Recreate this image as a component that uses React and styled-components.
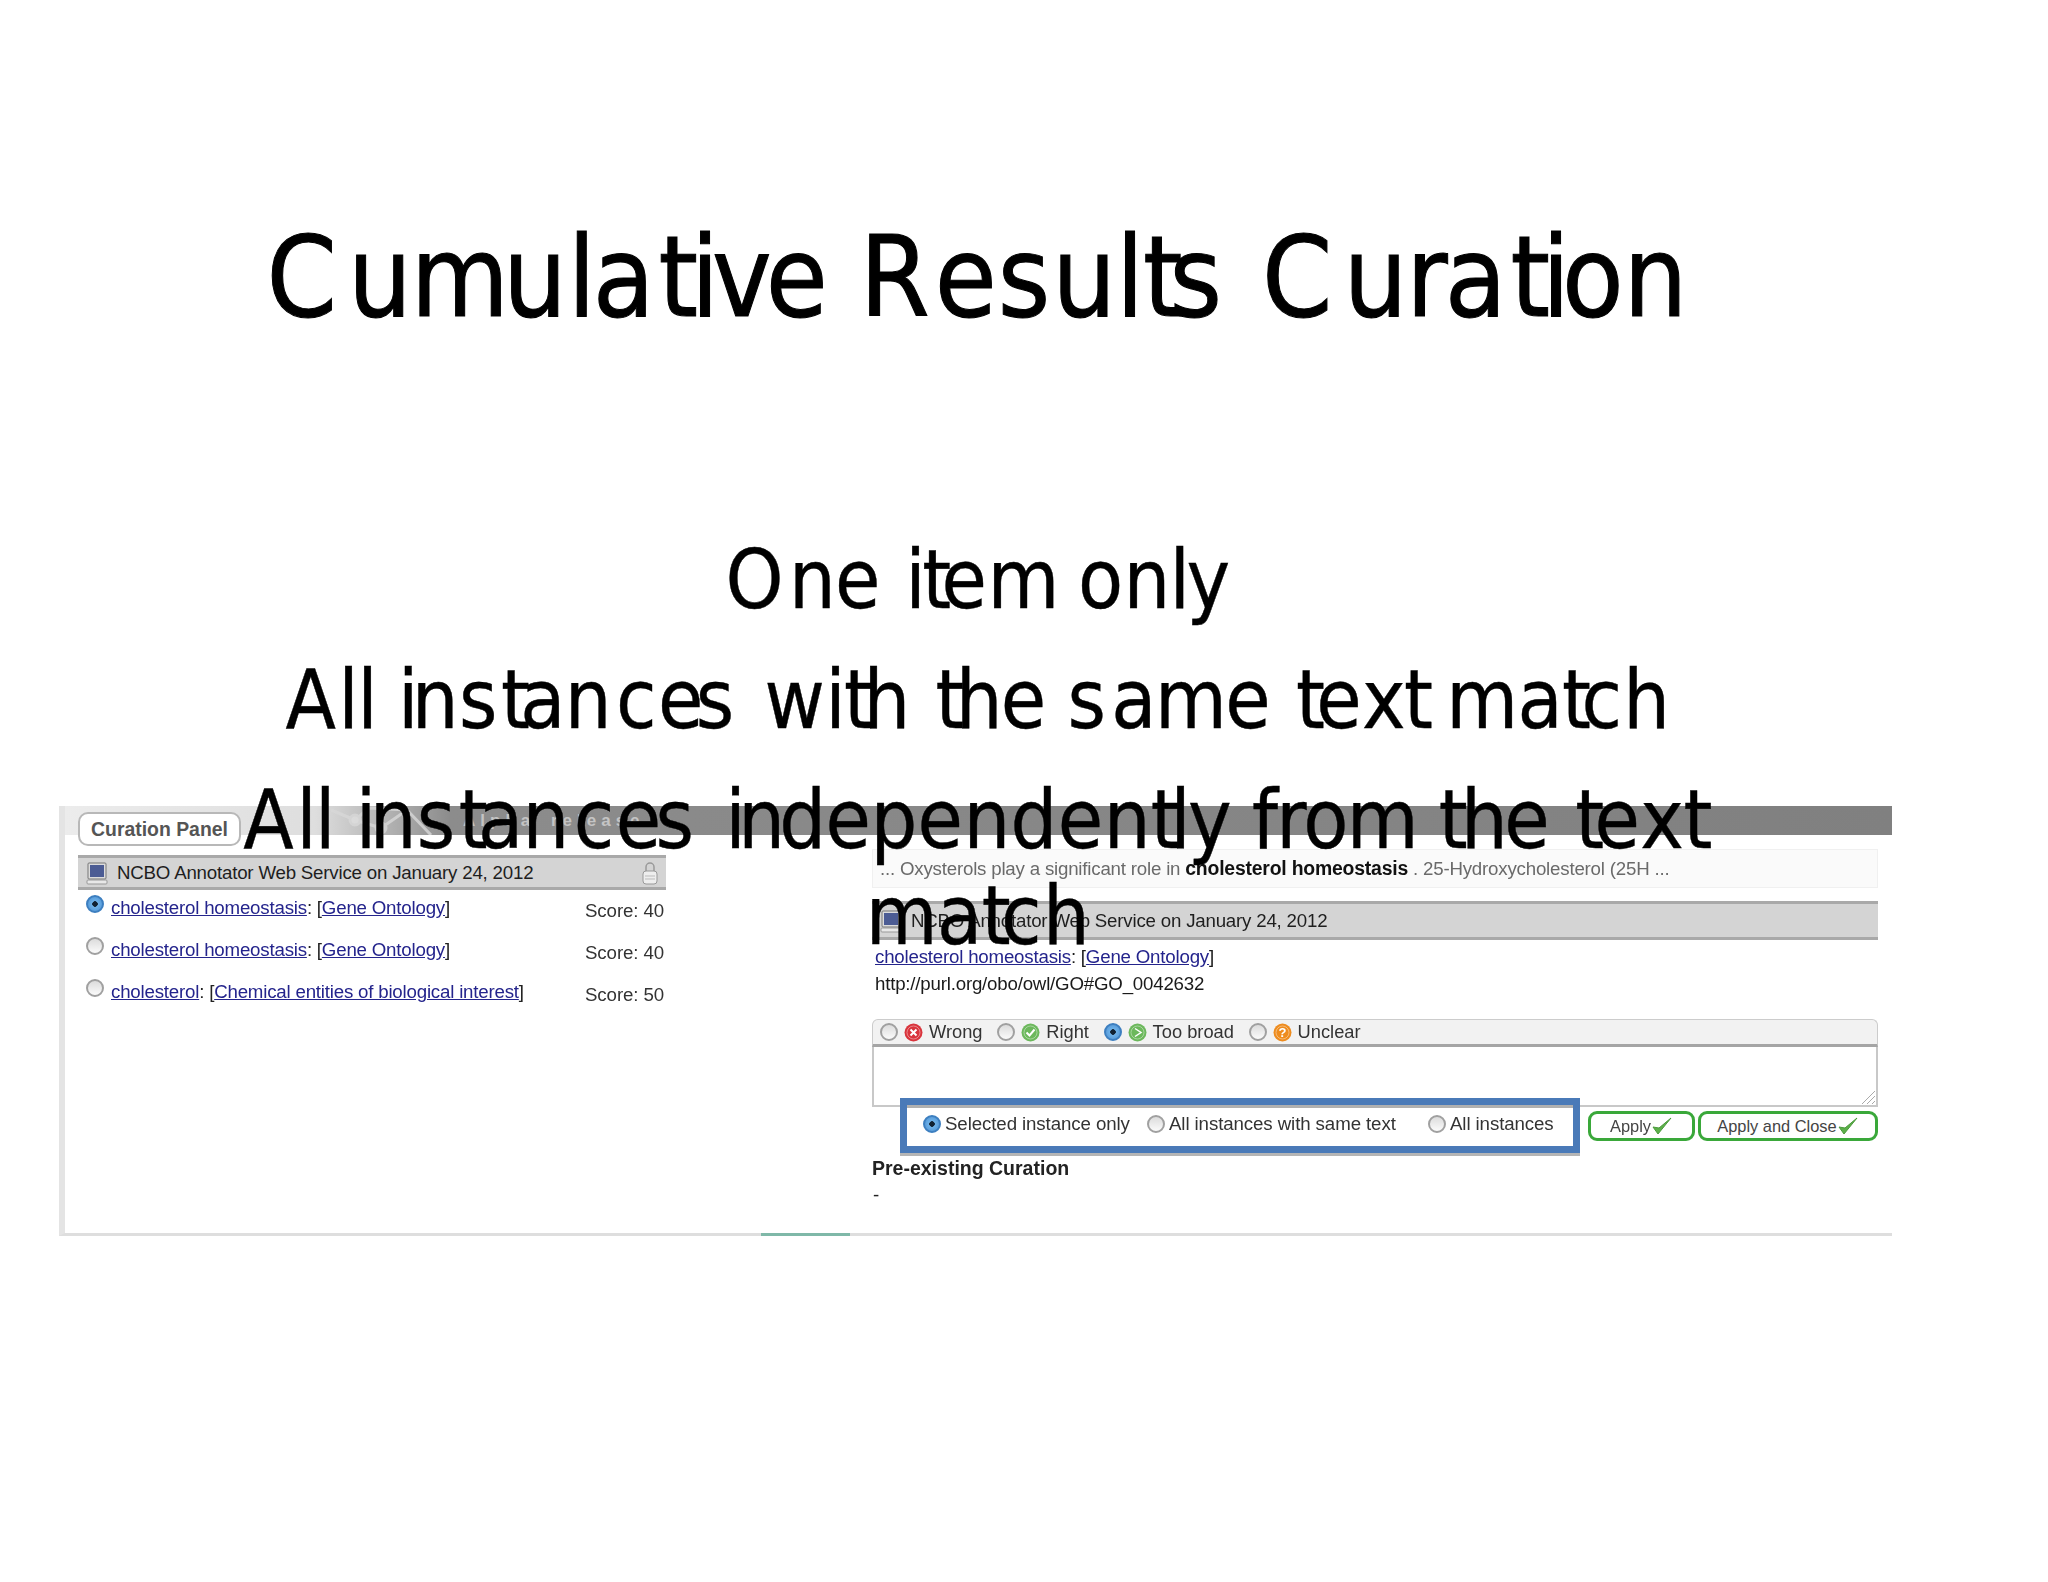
import React from 'react'
import styled, { createGlobalStyle } from 'styled-components'

const GlobalStyle = createGlobalStyle`
html, body {
  margin: 0;
  padding: 0;
  background: #fff;
}
`

const Slide = styled.div`
width: 2048px;
height: 1582px;
background: #fff;
color: #000;
font-family: "DejaVu Sans", sans-serif;
font-stretch: condensed;
overflow: hidden;
display: flex;
flex-direction: column;
`

const Title = styled.h1`
margin: 0;
padding-top: 212px;
height: 320px;
font-size: 112px;
line-height: 130px;
font-weight: 400;
text-align: center;
width: 1954px;
white-space: nowrap;
-webkit-text-stroke: 1px #000;
`

const Bullets = styled.div`
position: relative;
z-index: 2;
height: 0;
width: 1640px;
margin-left: 157px;
text-align: center;
font-size: 82px;
-webkit-text-stroke: 0.4px #000;
`

const Bullet = styled.p`
margin: 0 0 24px;
line-height: 96px;
`

const Glyphs = styled.span`
letter-spacing: ${p => p.$k}px;
`

const Panel = styled.div`
margin: 274px 0 0 59px;
width: 1833px;
height: 430px;
box-sizing: border-box;
border-left: 6px solid #e4e4e4;
border-bottom: 3px solid #dedede;
position: relative;
filter: blur(0.45px);
font-family: "Liberation Sans", sans-serif;
font-stretch: normal;
font-size: 18.7px;
color: #222;
`

const TopBar = styled.div`
height: 29px;
position: relative;
background: linear-gradient(90deg, #ececec 0, #dedede 250px, #b4b4b4 320px, #8c8c8c 385px, #808080 100%);
color: #c4c4c4;
font-size: 17px;
font-weight: bold;
letter-spacing: 5px;
word-spacing: 6px;
padding-left: 398px;
line-height: 30px;
white-space: nowrap;
`

const Tab = styled.div`
position: absolute;
left: 13px;
top: 6px;
width: 163px;
height: 34px;
box-sizing: border-box;
background: #fff;
border: 2px solid #b8b8b8;
border-radius: 10px;
font-weight: bold;
color: #555;
font-size: 19.4px;
line-height: 31px;
text-align: center;
white-space: nowrap;
`

const Logo = styled.svg`
position: absolute;
left: 262px;
top: 0;
`

const Columns = styled.div`
display: grid;
grid-template-columns: 588px 1006px;
column-gap: 206px;
padding-left: 13px;
`

const Column = styled.div`
display: flex;
flex-direction: column;
`

const SectionHead = styled.div`
height: ${p => p.$h}px;
margin-top: ${p => p.$top}px;
box-sizing: border-box;
display: flex;
align-items: center;
gap: 9px;
padding: 0 8px;
background: #d4d4d4;
border-top: 3px solid #a9a9a9;
border-bottom: 3px solid #a9a9a9;
font-size: 18.7px;
color: #1e1e1e;
letter-spacing: -0.2px;
`

const HeadText = styled.span`
flex: 1;
`

const Row = styled.div`
display: flex;
align-items: center;
height: 42px;
padding-left: 8px;
`

const Hit = styled.span`
margin-left: 7px;
flex: 1;
letter-spacing: -0.2px;
position: relative;
top: -3px;
`

const Link = styled.a`
color: #24248c;
text-decoration: underline;
`

const Score = styled.span`
color: #333;
width: 81px;
letter-spacing: -0.1px;
`

const Radio = styled.span`
display: inline-block;
flex: none;
width: 18px;
height: 18px;
box-sizing: border-box;
border-radius: 50%;
border: 2px solid ${p => (p.$on ? '#3d7fc0' : '#a0a0a0')};
background: ${p =>
    p.$on
      ? 'radial-gradient(circle, #123 0 2.5px, #6eb2ea 3px, #4d90d0 100%)'
      : 'linear-gradient(#dcdcdc, #fbfbfb)'};
position: relative;
top: ${p => p.$shift || 0}px;
`

const Excerpt = styled.div`
margin-top: 14px;
height: 39px;
box-sizing: border-box;
padding-left: 7px;
line-height: 37px;
background: #fafafa;
border: 1px solid #f0f0f0;
color: #6a6a6a;
letter-spacing: -0.2px;
white-space: nowrap;
b {
  color: #111;
  font-size: 19.4px;
}
`

const Line = styled.div`
padding-left: 3px;
height: ${p => p.$h}px;
line-height: ${p => p.$h}px;
letter-spacing: -0.2px;
color: #1a1a1a;
white-space: nowrap;
`

const Verdicts = styled.div`
margin-top: 25px;
height: 28px;
box-sizing: border-box;
border: 1px solid #ccc;
border-bottom: 3px solid #a5a5a5;
border-radius: 6px 6px 0 0;
background: #f2f2f2;
display: flex;
align-items: center;
padding-left: 7px;
font-size: 18.3px;
`

const Verdict = styled.label`
display: flex;
align-items: center;
gap: 6px;
margin-right: 14.7px;
color: #333;
`

const NoteArea = styled.div`
height: 60px;
box-sizing: border-box;
border: 2px solid #c8c8c8;
border-top: none;
position: relative;
`

const Grip = styled.svg`
position: absolute;
right: 0;
bottom: 0;
`

const ActionRow = styled.div`
display: flex;
margin-top: -9px;
padding-left: 28px;
position: relative;
`

const ScopeBox = styled.div`
width: 680px;
height: 55px;
box-sizing: border-box;
background: #fff;
border: 7px solid #4a7ab8;
box-shadow: 0 3px 0 #b5b5b5, inset 0 3px 0 #b0b0b0;
display: flex;
align-items: center;
padding: 0 0 3px 16px;
`

const Scope = styled.label`
display: flex;
align-items: center;
gap: 4px;
width: ${p => p.$w}px;
color: #333;
letter-spacing: -0.1px;
white-space: nowrap;
`

const GreenButton = styled.button`
height: 30px;
margin: 13px 0 0 ${p => p.$left}px;
width: ${p => p.$w}px;
background: #fff;
border: 3px solid #3aa83a;
border-radius: 9px;
padding: 0;
font-family: inherit;
font-size: 16.4px;
color: #444;
display: flex;
align-items: center;
justify-content: center;
`

const PreHead = styled.div`
margin-top: 3px;
height: 24px;
line-height: 24px;
font-size: 19.5px;
font-weight: bold;
color: #222;
`

const Dash = styled.div`
height: 30px;
line-height: 30px;
padding-left: 1px;
`

const Accent = styled.div`
position: absolute;
left: 696px;
bottom: -3px;
width: 89px;
height: 3px;
background: #7fb8a8;
`

const Monitor = () => (
  <svg width="22" height="24" viewBox="0 0 22 24">
    <rect x="2" y="2" width="18" height="16" rx="1" fill="#dcdcdc" stroke="#777" />
    <rect x="4" y="4" width="14" height="12" fill="#4c5c94" />
    <rect x="1" y="19" width="20" height="4" rx="1" fill="#e8e8e8" stroke="#999" />
  </svg>
)

const Lock = () => (
  <svg width="16" height="24" viewBox="0 0 16 24">
    <path d="M4 10V6a4 4 0 0 1 8 0v4" fill="none" stroke="#999" strokeWidth="1.5" />
    <rect x="1" y="10" width="14" height="13" rx="3" fill="#eee" stroke="#999" />
    <path d="M3 15h10M3 18h10" stroke="#bbb" />
  </svg>
)

const Status = ({ color, children }) => (
  <svg width="19" height="19" viewBox="0 0 19 19">
    <circle cx="9.5" cy="9.5" r="9" fill={color} />
    <circle cx="9.5" cy="9.5" r="6.5" fill="none" stroke="#ffffff66" />
    {children}
  </svg>
)

const Check = () => (
  <svg width="22" height="20" viewBox="0 0 22 20">
    <path d="M2 11l5 7L20 2l-12 10z" fill="#5cb04a" stroke="#4a9a3a" />
  </svg>
)

// [text, letter-spacing in px] runs, the exported slide has uneven glyph advances
const titleRuns = [
  ['C', 11], ['u', -1], ['m', -6], ['u', 1], ['l', -3], ['a', 4], ['ti', -7], ['v', -6], ['e ', 0],
  ['R', 5], ['e', 1], ['s', 2], ['u', 0], ['l', -1], ['t', -13], ['s ', 4],
  ['C', 11], ['u', -1], ['r', -3], ['a', 4], ['ti', -8], ['on', 0],
]

const bulletRuns = [
  [['O', 7], ['n', 1], ['e ', 2.3], ['i', -2], ['t', -8], ['e', 2], ['m ', -0.8], ['o', 2], ['n', 1], ['l', -2], ['y', 0]],
  [
    ['A', 4], ['ll ', 0], ['i', -5], ['n', 2], ['s', 5], ['t', -8], ['a', 1], ['n', 6], ['c', 3], ['e', -6], ['s', 5], [' ', 5],
    ['w', 2], ['i', 0], ['t', -8], ['h', 1], [' ', 4], ['t', -7], ['he', 0], [' ', 1],
    ['s', 7], ['am', 0], ['e', 0], [' ', 5], ['t', -7], ['e', 2], ['x', 0], ['t', 0], [' ', -7],
    ['ma', 1], ['t', -8], ['c', 3], ['h', 0],
  ],
  [
    ['A', 4], ['ll ', 0], ['i', -5], ['n', 2], ['s', 5], ['t', -8], ['a', 1], ['n', 6], ['c', 3], ['e', -4], ['s', 3], [' ', 8],
    ['i', -6], ['n', -4], ['de', 1], ['penden', 2], ['t', -8], ['l', -1], ['y ', 0],
    ['from', 0], [' ', 0], ['t', -5], ['h', -2], ['e', 1.3], [' ', 4], ['t', -8], ['e', 2], ['x', 1], ['t ', 0],
    ['ma', 1], ['t', -8], ['c', 3], ['h', 0],
  ],
]

const Kerned = ({ runs, base = 0 }) =>
  runs.map(([text, k], i) => <Glyphs key={i} $k={k + base}>{text}</Glyphs>)

const hits = [
  { term: 'cholesterol homeostasis', onto: 'Gene Ontology', score: 40, on: true },
  { term: 'cholesterol homeostasis', onto: 'Gene Ontology', score: 40 },
  { term: 'cholesterol', onto: 'Chemical entities of biological interest', score: 50 },
]

export default function App() {
  return (
    <Slide>
      <GlobalStyle />
      <Title><Kerned runs={titleRuns} /></Title>
      <Bullets>
        {bulletRuns.map((runs, i) => (
          <Bullet key={i}><Kerned runs={runs} base={-1.6} /></Bullet>
        ))}
      </Bullets>
      <Panel>
        <TopBar>
          <Logo width="125" height="29" viewBox="0 0 125 29">
            <g stroke="#d8d8d8" strokeWidth="3" fill="none" opacity="0.8">
              <path d="M4 4l24 10 26 8M28 14l14-12M54 22l26-18M80 4l24 25M42 2l38 2" />
              <circle cx="28" cy="14" r="5" fill="#e0e0e0" />
              <circle cx="54" cy="22" r="5" fill="#e0e0e0" />
            </g>
          </Logo>
          Alpha release
        </TopBar>
        <Tab>Curation Panel</Tab>
        <Columns>
          <Column>
            <SectionHead $top={20} $h={35}>
              <Monitor />
              <HeadText>NCBO Annotator Web Service on January 24, 2012</HeadText>
              <Lock />
            </SectionHead>
            {hits.map((h, i) => (
              <Row key={i}>
                <Radio $on={h.on} $shift={-7} />
                <Hit>
                  <Link>{h.term}</Link>: [<Link>{h.onto}</Link>]
                </Hit>
                <Score>Score: {h.score}</Score>
              </Row>
            ))}
          </Column>
          <Column>
            <Excerpt>
              ... Oxysterols play a significant role in <b>cholesterol homeostasis</b> . 25-Hydroxycholesterol (25H ...
            </Excerpt>
            <SectionHead $top={13} $h={39}>
              <Monitor />
              <HeadText>NCBO Annotator Web Service on January 24, 2012</HeadText>
            </SectionHead>
            <Line $h={34}>
              <Link>cholesterol homeostasis</Link>: [<Link>Gene Ontology</Link>]
            </Line>
            <Line $h={20}>http://purl.org/obo/owl/GO#GO_0042632</Line>
            <Verdicts>
              <Verdict>
                <Radio />
                <Status color="#d9343c"><path d="M6.5 6.5l6 6M12.5 6.5l-6 6" stroke="#fff" strokeWidth="2" /></Status>
                Wrong
              </Verdict>
              <Verdict>
                <Radio />
                <Status color="#6cb85c"><path d="M5.5 9.5l3 3 5-6" stroke="#fff" strokeWidth="2" fill="none" /></Status>
                Right
              </Verdict>
              <Verdict>
                <Radio $on />
                <Status color="#6cb85c"><path d="M7 5.5l6 4-6 4" stroke="#fff" strokeWidth="1.5" fill="none" /></Status>
                Too broad
              </Verdict>
              <Verdict>
                <Radio />
                <Status color="#ee8c1e"><text x="9.5" y="14" fontSize="13" fontWeight="bold" textAnchor="middle" fill="#fff">?</text></Status>
                Unclear
              </Verdict>
            </Verdicts>
            <NoteArea>
              <Grip width="16" height="16" viewBox="0 0 16 16">
                <path d="M2 15L15 2M7 15l8-8M12 15l3-3" stroke="#aaa" />
              </Grip>
            </NoteArea>
            <ActionRow>
              <ScopeBox>
                <Scope $w={224}><Radio $on />Selected instance only</Scope>
                <Scope $w={281}><Radio />All instances with same text</Scope>
                <Scope $w={120}><Radio />All instances</Scope>
              </ScopeBox>
              <GreenButton $left={8} $w={107}>Apply<Check /></GreenButton>
              <GreenButton $left={3} $w={180}>Apply and Close<Check /></GreenButton>
            </ActionRow>
            <PreHead>Pre-existing Curation</PreHead>
            <Dash>-</Dash>
          </Column>
        </Columns>
        <Accent />
      </Panel>
    </Slide>
  )
}
